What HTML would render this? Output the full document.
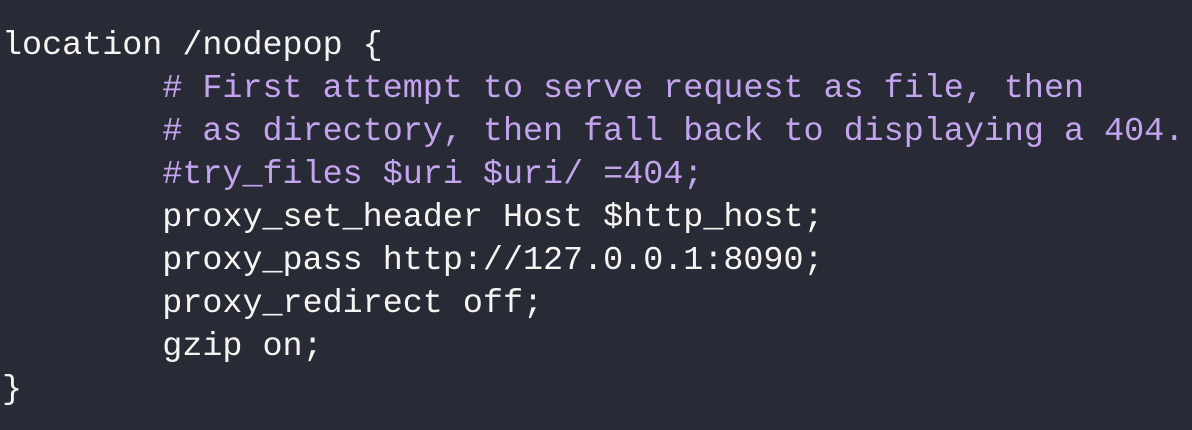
<!DOCTYPE html>
<html><head><meta charset="utf-8"><style>
html,body{margin:0;padding:0;background:#282a36;width:1192px;height:430px;overflow:hidden}
pre{margin:0;position:absolute;left:2px;top:25px;font-family:"Liberation Mono",monospace;font-size:33.4px;line-height:43px;color:#f4f4f0;white-space:pre}
.c{color:#c4a4ee}
</style></head><body>
<pre>location /nodepop {
        <span class="c"># First attempt to serve request as file, then</span>
        <span class="c"># as directory, then fall back to displaying a 404.</span>
        <span class="c">#try_files $uri $uri/ =404;</span>
        proxy_set_header Host $http_host;
        proxy_pass http://127.0.0.1:8090;
        proxy_redirect off;
        gzip on;
}</pre>
</body></html>
